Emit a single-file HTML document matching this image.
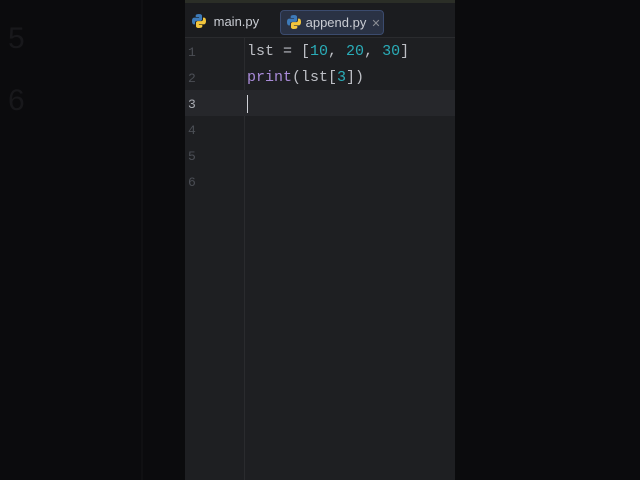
<!DOCTYPE html>
<html><head><style>
body{margin:0;width:640px;height:480px;background:#0b0b0d;position:relative;overflow:hidden;font-family:"Liberation Sans",sans-serif}
.ghost{position:absolute;left:8px;color:#18181b;font-size:30px;font-family:"Liberation Sans",sans-serif}
.vl{position:absolute;left:141px;top:0;width:2px;height:480px;background:#101012}
#ed{position:absolute;left:185px;top:0;width:270px;height:480px;background:#1e1f22}
.top{position:absolute;left:0;top:0;width:270px;height:3px;background:#2b2e27}
.tabs{position:absolute;left:0;top:3px;width:270px;height:34px;background:#1b1c1f;border-bottom:1px solid #2a2b2e}
.tab{position:absolute;top:7px;height:23px;font-size:13px;color:#c9ccd3;line-height:23px;white-space:nowrap}
.act{background:#2a3244;border:1px solid #3b4b6e;border-radius:4px}
.gut{position:absolute;left:59px;top:38px;width:1px;height:442px;background:#2a2b2e}
.hl{position:absolute;left:0;top:90px;width:270px;height:26px;background:#26272b}
.ln{position:absolute;left:3px;font:13px "Liberation Mono",monospace;color:#4b4e55}
.code{position:absolute;left:62px;font:15px "Liberation Mono",monospace;color:#bcbec4;white-space:pre}
.n{color:#2aacb8}.f{color:#a98bd9}
.cur{position:absolute;left:62px;top:95px;width:1px;height:18px;background:#ced0d6}
</style></head><body>
<div class="ghost" style="top:22px">5</div>
<div class="ghost" style="top:84px">6</div>
<div class="vl"></div>
<div id="ed">
<div class="top"></div>
<div class="tabs">
<div class="tab" style="left:6px"><svg width="16" height="16" viewBox="0 0 16 16" style="vertical-align:-3px"><path d="M8 1C4.5 1 4.7 2.5 4.7 2.5V4h3.4v.6H3.2S1 4.4 1 8s1.9 3.4 1.9 3.4H4V9.8s-.1-1.9 1.9-1.9h3.3s1.8 0 1.8-1.8V2.9S11.3 1 8 1z" fill="#3d7ab8"/><path d="M8 15c3.5 0 3.3-1.5 3.3-1.5V12H7.9v-.6h4.9S15 11.6 15 8s-1.9-3.4-1.9-3.4H12v1.6s.1 1.9-1.9 1.9H6.8S5 8.1 5 9.9v3.2S4.7 15 8 15z" fill="#f2c53d"/></svg> <span style="margin-left:3px">main.py</span></div>
<div class="tab act" style="left:95px;width:102px"><span style="margin-left:5px"><svg width="16" height="16" viewBox="0 0 16 16" style="vertical-align:-3px"><path d="M8 1C4.5 1 4.7 2.5 4.7 2.5V4h3.4v.6H3.2S1 4.4 1 8s1.9 3.4 1.9 3.4H4V9.8s-.1-1.9 1.9-1.9h3.3s1.8 0 1.8-1.8V2.9S11.3 1 8 1z" fill="#3d7ab8"/><path d="M8 15c3.5 0 3.3-1.5 3.3-1.5V12H7.9v-.6h4.9S15 11.6 15 8s-1.9-3.4-1.9-3.4H12v1.6s.1 1.9-1.9 1.9H6.8S5 8.1 5 9.9v3.2S4.7 15 8 15z" fill="#f2c53d"/></svg></span> append.py<span style="color:#8a8d94;font-size:11px;margin-left:5px">✕</span></div>
</div>
<div class="gut"></div>
<div class="hl"></div>
<div class="ln" style="top:45px">1</div>
<div class="ln" style="top:71px">2</div>
<div class="ln" style="top:97px;color:#a9acb3">3</div>
<div class="ln" style="top:123px">4</div>
<div class="ln" style="top:149px">5</div>
<div class="ln" style="top:175px">6</div>
<div class="code" style="top:43px">lst = [<span class="n">10</span>, <span class="n">20</span>, <span class="n">30</span>]</div>
<div class="code" style="top:69px"><span class="f">print</span>(lst[<span class="n">3</span>])</div>
<div class="cur"></div>
</div>
</body></html>
